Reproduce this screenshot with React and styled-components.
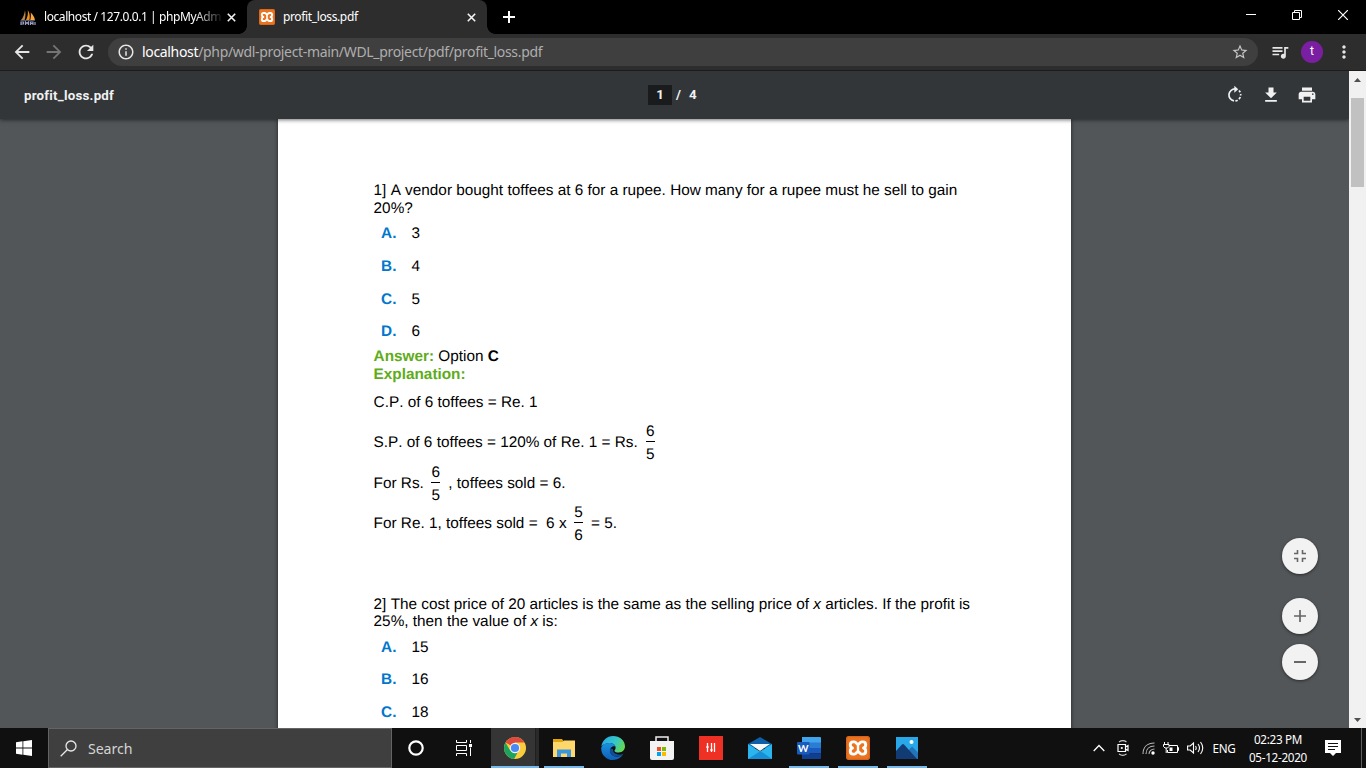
import React from 'react';
import styled, { createGlobalStyle } from 'styled-components';
import {
  MdArrowBack, MdArrowForward, MdRefresh, MdInfoOutline, MdStarBorder,
  MdQueueMusic, MdMoreVert, MdFileDownload, MdPrint,
} from 'react-icons/md';

const ui = '"Noto Sans", "Open Sans", sans-serif';

const Global = createGlobalStyle`
  * { box-sizing: border-box; }
  html, body { margin: 0; padding: 0; overflow: hidden; }
  svg { display: block; flex: none; }
`;

const Screen = styled.div`
  width: 1366px;
  height: 768px;
  display: flex;
  flex-direction: column;
  overflow: hidden;
  font-family: ${ui};
`;

/* ---------- browser chrome ---------- */
const TabStrip = styled.div`
  height: 34px;
  flex: none;
  background: #000;
  display: flex;
  color: #fff;
`;

const Tab = styled.div`
  position: relative;
  width: ${p => p.$w}px;
  height: 34px;
  display: flex;
  align-items: center;
  padding: 0 11px 0 ${p => p.$pl}px;
  border-radius: 8px 8px 0 0;
  background: ${p => (p.$active ? '#2d2d2d' : '#000')};
  &::before, &::after {
    content: '';
    display: ${p => (p.$active ? 'block' : 'none')};
    position: absolute;
    bottom: 0;
    width: 8px;
    height: 8px;
  }
  &::before { left: -8px; background: radial-gradient(circle at 0 0, transparent 7.5px, #2d2d2d 8px); }
  &::after { right: -8px; background: radial-gradient(circle at 100% 0, transparent 7.5px, #2d2d2d 8px); }
`;

const TabTitle = styled.span`
  flex: 1;
  margin: 0 2px 0 8px;
  white-space: nowrap;
  font-size: 12px;
  line-height: 18px;
  letter-spacing: ${p => p.$ls}px;
  ${p => p.$fade && 'mask-image: linear-gradient(90deg, #000 150px, transparent 180px);'}
`;

const NewTab = styled.div`
  width: 44px;
  display: flex;
  align-items: center;
  justify-content: center;
`;

const WindowControls = styled.div`
  margin-left: auto;
  display: flex;
  height: 29px;
  & > div { width: 46px; display: flex; align-items: center; justify-content: center; }
`;

const NavBar = styled.div`
  height: 37px;
  flex: none;
  display: flex;
  align-items: center;
  padding: 0 11px;
  background: #2d2d2d;
  border-bottom: 1px solid #1c1c1c;
  color: #e6e6e6;
  & > * { flex: none; }
`;

const NavButton = styled.div`
  width: 32px;
  display: flex;
  justify-content: flex-start;
  color: ${p => (p.$off ? '#757575' : '#e6e6e6')};
`;

const Omnibox = styled.div`
  width: 1150px;
  height: 28px;
  margin: 0 12px 0 1px;
  border-radius: 14px;
  background: #3f3f3f;
  display: flex;
  align-items: center;
  padding: 0 9px;
`;

const Url = styled.span`
  flex: 1;
  margin-left: 7px;
  font-size: 14px;
  line-height: 20px;
  letter-spacing: ${p => p.$ls}px;
  color: #aeaeae;
  white-space: nowrap;
  b { font-weight: 400; color: #fff; }
`;

const Avatar = styled.div`
  width: 22px;
  height: 22px;
  margin: 0 11px;
  border-radius: 50%;
  background: #7b1fa2;
  color: #fff;
  text-align: center;
  font: 12px/21px Roboto, sans-serif;
`;

/* ---------- pdf viewer ---------- */
const Viewer = styled.div`
  height: 657px;
  flex: none;
  display: flex;
  background: #525659;
`;

const ViewerMain = styled.div`
  position: relative;
  width: 1349px;
  height: 657px;
  display: flex;
  flex-direction: column;
  overflow: hidden;
`;

const PdfBar = styled.div`
  position: relative;
  z-index: 1;
  height: 48px;
  flex: none;
  display: grid;
  grid-template-columns: 648px 1fr auto;
  align-items: center;
  padding-right: 32px;
  background: #323639;
  box-shadow: 0 1px 4px rgba(0, 0, 0, 0.55);
  color: #f1f1f1;
  font: 700 13.3px/20px Roboto, sans-serif;
`;

const FileName = styled.div`
  padding: 1px 0 0 24px;
  letter-spacing: ${p => p.$ls}px;
`;

const Pager = styled.div`
  display: flex;
  align-items: center;
  & > b { width: 24px; height: 20px; margin-right: 4px; background: #191b1d; text-align: center; font-weight: 700; }
  & > i { font-style: normal; width: 13px; }
`;

const PdfTools = styled.div`
  display: flex;
  gap: 16px;
`;

const Page = styled.div`
  width: 793px;
  height: 1123px;
  flex: none;
  margin-left: 278px;
  padding: 63px 96px 0 95.6px;
  background: #fff;
  box-shadow: 0 0 4px rgba(0, 0, 0, 0.6);
  color: #000;
  font: 15.33px/18px "Liberation Sans", Arial, sans-serif;
  font-kerning: none;
  text-rendering: geometricPrecision;
`;

const Question = styled.p`
  margin: 0 -10px ${p => p.$mb}px 0;
  line-height: ${p => p.$lh || 18}px;
  white-space: nowrap;
`;

const Option = styled.div`
  display: flex;
  height: ${p => p.$h}px;
  padding-left: 7.5px;
  & > b { width: 30.5px; color: #0077cc; }
`;

const Para = styled.div`
  margin-top: ${p => p.$mt || 0}px;
  b.label { color: #5eac1a; }
`;

const Equation = styled.div`
  display: flex;
  height: ${p => p.$h}px;
  white-space: pre;
  & > span { padding-top: 10px; }
`;

const FractionBox = styled.div`
  width: 9px;
  height: 40px;
  margin: -1px ${p => p.$r || 0}px 0 ${p => p.$l}px;
  display: flex;
  flex-direction: column;
  align-items: center;
  & > hr { width: 9px; height: 1px; margin: 0 0 4px; border: 0; background: #000; flex: none; }
`;

const ZoomButtons = styled.div`
  position: absolute;
  z-index: 2;
  right: 31px;
  top: 467px;
  display: flex;
  flex-direction: column;
`;

const RoundButton = styled.div`
  width: 36px;
  height: 36px;
  margin-bottom: ${p => p.$mb || 0}px;
  border-radius: 50%;
  background: #f2f2f2;
  box-shadow: 0 1px 3px rgba(0, 0, 0, 0.5);
  display: flex;
  align-items: center;
  justify-content: center;
`;

const ScrollTrack = styled.div`
  width: 17px;
  display: flex;
  flex-direction: column;
  justify-content: space-between;
  align-items: center;
  padding: 7px 0 6px;
  background: #f1f1f1;
`;

const ScrollThumb = styled.div`
  width: 13px;
  height: 89px;
  margin: 16px 0 auto;
  background: #c1c1c1;
`;

/* ---------- taskbar ---------- */
const Taskbar = styled.div`
  height: 40px;
  flex: none;
  display: flex;
  background: #101010;
  color: #fff;
`;

const Start = styled.div`
  width: 48px;
  display: flex;
  align-items: center;
  justify-content: center;
`;

const Search = styled.div`
  width: 344px;
  display: flex;
  align-items: center;
  padding-left: 11px;
  gap: 11px;
  background: #3f3f3f;
  border: 1px solid #646464;
  color: #d4d4d4;
  font-size: 14.2px;
  letter-spacing: ${p => p.$ls}px;
`;

const Apps = styled.div`
  display: flex;
`;

const AppSlot = styled.div`
  width: ${p => p.$w || 49}px;
  display: flex;
  align-items: center;
  justify-content: center;
`;

const AppTile = styled.div`
  width: ${p => p.$w || 40}px;
  height: 40px;
  display: flex;
  align-items: center;
  justify-content: center;
  background: ${p => (p.$focus ? 'linear-gradient(90deg, #353535 44px, #202020 44px, #202020 45px, #2a2a2a 45px)' : 'transparent')};
  border-bottom: 2px solid ${p => (p.$open ? '#76b9ed' : 'transparent')};
  padding-top: 2px;
`;

const Tray = styled.div`
  margin-left: auto;
  width: 279px;
  display: flex;
  align-items: center;
`;

const TrayIcon = styled.div`
  width: ${p => p.$w}px;
  display: flex;
  justify-content: center;
`;

const TrayText = styled.div`
  width: ${p => p.$w}px;
  text-align: center;
  font-size: 11.7px;
  line-height: 18px;
  letter-spacing: ${p => p.$ls}px;
  white-space: nowrap;
`;

const ShowDesktop = styled.div`
  margin-left: auto;
  width: 5px;
  height: 40px;
  border-left: 1px solid #5d5d5d;
`;

const Xampp = ({ size }) => (
  <svg width={size} height={size} viewBox="0 0 24 24">
    <rect width="24" height="24" rx="3" fill="#ec7420" />
    <rect x="0.7" y="0.7" width="22.6" height="22.6" rx="2.500" fill="none" stroke="#d2601a" strokeWidth="1" />
    <path d="M7 5.900h1.500c1.700 0 1.900 2.300 3.500 2.300s1.800-2.300 3.500-2.300H17c1.900 0 2.700 1.200 2.700 2.900 0 1.500-.8 2.900-2.200 3.200 1.400.3 2.200 1.700 2.200 3.200 0 1.700-.8 2.900-2.700 2.900h-1.500c-1.700 0-1.900-2.300-3.500-2.300s-1.800 2.300-3.500 2.300H7c-1.900 0-2.700-1.200-2.700-2.900 0-1.500.8-2.900 2.200-3.200-1.400-.3-2.200-1.700-2.200-3.200 0-1.700.8-2.900 2.700-2.900z" fill="none" stroke="#fff" strokeWidth="2.900" strokeLinejoin="round" />
    <path d="M10.800 12h2.400" stroke="#fff" strokeWidth="6" />
  </svg>
);

const PhpMyAdminIcon = () => (
  <svg width="16" height="16" viewBox="0 0 16 16">
    <path d="M1 11C3 9 4.600 5 5 1.200 5.800 4.500 5.600 8 4.600 11z" fill="#b88a50" />
    <path d="M6 11c1.600-3 2.200-6.500 1.800-10 2 3.400 2.500 6.500 1.600 10z" fill="#f09020" />
    <path d="M10.200 11c.8-2.800.9-5 .4-7.400 2.600 2.500 4 4.800 4.300 7.400z" fill="#f7a63a" />
    <path d="M.5 11.500h14.500" stroke="#4e5069" strokeWidth="1" />
    <path d="M1 16v-3h2.500v2H1M5.500 16v-3l1.500 1.500L8.500 13v3M10.500 16v-3H13v3M10.500 14.500H13M15 13v3" fill="none" stroke="#9a9ec4" strokeWidth="1.200" />
  </svg>
);

const CloseX = () => (
  <svg width="9" height="9" viewBox="0 0 9 9">
    <path d="M.8.8l7.400 7.400M8.200.8L.8 8.200" stroke="#f4f4f4" strokeWidth="1.600" />
  </svg>
);

const RotateIcon = () => (
  <svg width="20" height="20" viewBox="0 0 20 20">
    <path d="M10.500 4a6 6 0 0 0-1.500 11.900" fill="none" stroke="#f1f1f1" strokeWidth="1.700" />
    <path d="M9.300.8l3.900 3.400-3.900 3.500z" fill="#f1f1f1" />
    <path d="M10.400 15.900a6 6 0 0 0 5.200-6.900" fill="none" stroke="#f1f1f1" strokeWidth="1.700" strokeDasharray="2.400 1.500" />
    <path d="M14 5.500l1.300 1.800" stroke="#f1f1f1" strokeWidth="1.700" />
  </svg>
);

const Fraction = ({ top, bottom, left, right }) => (
  <FractionBox $l={left} $r={right}>
    <span>{top}</span>
    <hr />
    <span>{bottom}</span>
  </FractionBox>
);

const ChromeIcon = () => (
  <svg width="22" height="22" viewBox="0 0 22 22">
    <circle cx="11" cy="11" r="11" fill="#fbcd3c" />
    <path d="M11 11L1.500 5.500A11 11 0 0 1 20.500 5.500H11z" fill="#dd4b3e" />
    <path d="M1.500 5.500a11 11 0 0 0 8.600 16.500l4.600-8.600L11 11 6.200 13.600z" fill="#1da35c" />
    <circle cx="11" cy="11" r="5.200" fill="#f4f4f4" />
    <circle cx="11" cy="11" r="4.100" fill="#4a8af4" />
  </svg>
);

const ExplorerIcon = () => (
  <svg width="22" height="18" viewBox="0 0 22 18">
    <path d="M0 0h9l1.500 2H22v15.500H0z" fill="#e5a50a" />
    <path d="M0 3h9.500L11 1.600h11V18H0z" fill="#ffd76a" />
    <path d="M4 18v-7.500h14V18h-4v-3.500H8V18z" fill="#3a96dd" />
  </svg>
);

const EdgeIcon = () => (
  <svg width="24" height="24" viewBox="0 0 24 24">
    <defs>
      <linearGradient id="edgeTop" x1="0" x2="1" y1="0.2" y2="0.6">
        <stop offset="0" stopColor="#28a8e8" />
        <stop offset="0.55" stopColor="#35c8c8" />
        <stop offset="1" stopColor="#65d84e" />
      </linearGradient>
      <linearGradient id="edgeLow" x1="0" x2="0" y1="0" y2="1">
        <stop offset="0" stopColor="#1b92de" />
        <stop offset="1" stopColor="#0f5fb8" />
      </linearGradient>
    </defs>
    <path d="M.4 10.500C1.200 4.400 6 0 12 0c6.800 0 12 4.600 12 10.300 0 3.700-2.600 6.200-6.300 6.200-2.800 0-4.200-.9-4.200-1.800 0-.7 1.100-1.200 1.100-3C14.600 9.500 12.500 7 9 7 5.500 7 2 8.300.4 10.500z" fill="url(#edgeTop)" />
    <path d="M.3 11.500C1.500 8.300 5 6.900 8.800 7c3 .1 5.200 1.600 5.700 3.500C12 9.200 9 11.500 9 14.800c0 4 4.600 6.700 8.600 5.700 2-.4 3.600-1.500 4.700-2.700C20.500 21.500 16.500 24 12 24 5.400 24-.4 18.400.3 11.500z" fill="url(#edgeLow)" />
    <path d="M9.200 12.500c-1.600 4.500 2.300 9 8 8.100 2.200-.4 3.900-1.500 5.100-2.800-2.600 1.300-5.800 1.200-8-.2-1.700-1-2.500-2.500-2.300-4.600z" fill="#104d96" />
  </svg>
);

const StoreIcon = () => (
  <svg width="24" height="24" viewBox="0 0 24 24">
    <path d="M6 6V1h12v5" fill="none" stroke="#ededed" strokeWidth="1.500" />
    <path d="M0 5h24V22q0 2-2 2H2q-2 0-2-2z" fill="#f3f3f3" />
    <path d="M7 11h4v4H7z" fill="#f25022" />
    <path d="M12 11h4v4h-4z" fill="#7fba00" />
    <path d="M7 16h4v4H7z" fill="#00a4ef" />
    <path d="M12 16h4v4h-4z" fill="#ffb900" />
  </svg>
);

const MixerIcon = () => (
  <svg width="24" height="24" viewBox="0 0 24 24">
    <path d="M0 0h24v24H0z" fill="#ee3124" />
    <path d="M8.500 7v9M12.500 7v9M15.500 7v9" stroke="#fff" strokeWidth="1.300" />
    <path d="M7.300 11h2.400M11.300 14h2.400" stroke="#fff" strokeWidth="1.300" />
  </svg>
);

const MailIcon = () => (
  <svg width="24" height="22" viewBox="0 0 24 22">
    <path d="M0 7L12 0l12 7v4H0z" fill="#0f5ea8" />
    <path d="M0 7l12 7.500L24 7v15H0z" fill="#2bb5ee" />
    <path d="M0 22l12.500-8L24 22z" fill="#168fd8" />
    <path d="M2 7h20l-10 7z" fill="#f5f7f9" />
  </svg>
);

const WordIcon = () => (
  <svg width="24" height="22" viewBox="0 0 24 22">
    <path d="M5 0h18q1 0 1 1v5H5z" fill="#41a5ee" />
    <path d="M5 5.500h19V11H5z" fill="#2b7cd3" />
    <path d="M5 11h19v5.500H5z" fill="#185abd" />
    <path d="M5 16.500h19V21q0 1-1 1H5z" fill="#103f91" />
    <rect y="5" width="12.500" height="12.500" rx="1" fill="#185abd" />
    <text x="6.250" y="14.800" fill="#fff" textAnchor="middle" fontFamily="Lato, sans-serif" fontWeight="700" fontSize="10">W</text>
  </svg>
);

const PhotosIcon = () => (
  <svg width="22" height="22" viewBox="0 0 22 22">
    <path d="M0 0h22v22H0z" fill="#28a8e8" />
    <path d="M10 16l6-6.500 6 6V22H10z" fill="#2472b8" />
    <path d="M0 14l6-6.500q1-.8 2 0L21 22H0z" fill="#123a73" />
    <circle cx="15.500" cy="5" r="2" fill="#fff" />
  </svg>
);

export default function App() {
  return (
    <Screen>
      <Global />
      <TabStrip>
        <Tab $w={247} $pl={20}>
          <PhpMyAdminIcon />
          <TabTitle $fade $ls={-0.42}>localhost / 127.0.0.1 | phpMyAdm</TabTitle>
          <CloseX />
        </Tab>
        <Tab $active $w={240} $pl={12}>
          <Xampp size={16} />
          <TabTitle $ls={-0.37}>profit_loss.pdf</TabTitle>
          <CloseX />
        </Tab>
        <NewTab>
          <svg width="12" height="12" viewBox="0 0 12 12">
            <path d="M6 0v12M0 6h12" stroke="#fff" strokeWidth="2" />
          </svg>
        </NewTab>
        <WindowControls>
          <div><svg width="10" height="10"><path d="M0 4.500h10" stroke="#fff" /></svg></div>
          <div>
            <svg width="10" height="10"><path d="M.5 2.500h7v7h-7zM2.500 2.500v-2h7v7h-2" fill="none" stroke="#fff" /></svg>
          </div>
          <div><svg width="10" height="10"><path d="M0 0l10 10M10 0L0 10" stroke="#fff" strokeWidth="1.200" /></svg></div>
        </WindowControls>
      </TabStrip>

      <NavBar>
        <NavButton><MdArrowBack size={22} /></NavButton>
        <NavButton $off><MdArrowForward size={22} /></NavButton>
        <NavButton><MdRefresh size={22} /></NavButton>
        <Omnibox>
          <MdInfoOutline size={18} />
          <Url $ls={-0.33}><b>localhost</b>/php/wdl-project-main/WDL_project/pdf/profit_loss.pdf</Url>
          <MdStarBorder size={18} color="#c4c4c4" />
        </Omnibox>
        <MdQueueMusic size={20} />
        <Avatar>t</Avatar>
        <MdMoreVert size={20} />
      </NavBar>

      <Viewer>
        <ViewerMain>
          <PdfBar>
            <FileName $ls={0.23}>profit_loss.pdf</FileName>
            <Pager><b>1</b><i>/</i><span>4</span></Pager>
            <PdfTools>
              <RotateIcon />
              <MdFileDownload size={20} />
              <MdPrint size={20} />
            </PdfTools>
          </PdfBar>
          <Page>
            <Question $mb={7}>
              1] A vendor bought toffees at 6 for a rupee. How many for a rupee must he sell to gain<br />20%?
            </Question>
            <Option $h={33}><b>A.</b>3</Option>
            <Option $h={33}><b>B.</b>4</Option>
            <Option $h={32}><b>C.</b>5</Option>
            <Option $h={25}><b>D.</b>6</Option>
            <Para><b className="label">Answer:</b> Option <b>C</b></Para>
            <Para><b className="label">Explanation:</b></Para>
            <Para $mt={10}>C.P. of 6 toffees = Re. 1</Para>
            <Para $mt={12}>
              <Equation $h={41}>
                <span>S.P. of 6 toffees = 120% of Re. 1 = Rs.</span>
                <Fraction top="6" bottom="5" left={8} />
              </Equation>
              <Equation $h={40}>
                <span>For Rs.</span>
                <Fraction top="6" bottom="5" left={7.5} right={8} />
                <span>, toffees sold = 6.</span>
              </Equation>
              <Equation $h={91}>
                <span>For Re. 1, toffees sold =  6 x</span>
                <Fraction top="5" bottom="6" left={7.5} right={8} />
                <span>= 5.</span>
              </Equation>
            </Para>
            <Question $mb={9} $lh={17}>
              2] The cost price of 20 articles is the same as the selling price of <i>x</i> articles. If the profit is<br />
              25%, then the value of <i>x</i> is:
            </Question>
            <Option $h={32}><b>A.</b>15</Option>
            <Option $h={33}><b>B.</b>16</Option>
            <Option $h={33}><b>C.</b>18</Option>
          </Page>
          <ZoomButtons>
            <RoundButton $mb={24}>
              <svg width="12" height="12" viewBox="0 0 12 12">
                <path d="M0 3.500h3.500V0M8.500 0v3.500H12M0 8.500h3.500V12M8.500 12V8.500H12" fill="none" stroke="#666" strokeWidth="1.600" />
              </svg>
            </RoundButton>
            <RoundButton $mb={10}>
              <svg width="12" height="12" viewBox="0 0 12 12"><path d="M6 0v12M0 6h12" stroke="#666" strokeWidth="1.700" /></svg>
            </RoundButton>
            <RoundButton>
              <svg width="12" height="12" viewBox="0 0 12 12"><path d="M0 6h12" stroke="#666" strokeWidth="2" /></svg>
            </RoundButton>
          </ZoomButtons>
        </ViewerMain>
        <ScrollTrack>
          <svg width="7" height="4"><path d="M0 4l3.500-4L7 4z" fill="#505050" /></svg>
          <ScrollThumb />
          <svg width="7" height="4"><path d="M0 0l3.500 4L7 0z" fill="#505050" /></svg>
        </ScrollTrack>
      </Viewer>

      <Taskbar>
        <Start>
          <svg width="16" height="16" viewBox="0 0 16 16">
            <path d="M0 2.200l6.500-.9v6.200H0zM7.300 1.200L16 0v7.500H7.300zM0 8.400h6.500v6.300L0 13.800zM7.300 8.400H16V16l-8.700-1.200z" fill="#fff" />
          </svg>
        </Start>
        <Search $ls={-0.1}>
          <svg width="17" height="17" viewBox="0 0 17 17">
            <circle cx="11" cy="6" r="5" fill="none" stroke="#e8e8e8" strokeWidth="1.300" />
            <path d="M7.500 9.500L.7 16.300" stroke="#e8e8e8" strokeWidth="1.300" />
          </svg>
          Search
        </Search>
        <Apps>
          <AppSlot $w={48}>
            <svg width="16" height="16"><circle cx="8" cy="8" r="6.700" fill="none" stroke="#fff" strokeWidth="2.200" /></svg>
          </AppSlot>
          <AppSlot $w={47}>
            <svg width="16" height="16" viewBox="0 0 16 16">
              <path d="M.5 0v2.500h10V0M.5 16v-2.500h10V16M.5 5.500h10v5H.5zM14.500 0v3M14.500 7.500V16" fill="none" stroke="#fff" />
              <path d="M13 4h3v3h-3z" fill="#fff" />
            </svg>
          </AppSlot>
          <AppSlot $w={56}><AppTile $focus $open $w={48}><ChromeIcon /></AppTile></AppSlot>
          <AppSlot $w={42}><AppTile $open><ExplorerIcon /></AppTile></AppSlot>
          <AppSlot $w={56}><AppTile><EdgeIcon /></AppTile></AppSlot>
          <AppSlot $w={41}><AppTile><StoreIcon /></AppTile></AppSlot>
          <AppSlot $w={58}><AppTile><MixerIcon /></AppTile></AppSlot>
          <AppSlot $w={40}><AppTile><MailIcon /></AppTile></AppSlot>
          <AppSlot $w={58}><AppTile $open><WordIcon /></AppTile></AppSlot>
          <AppSlot $w={40}><AppTile $open><Xampp size={24} /></AppTile></AppSlot>
          <AppSlot $w={58}><AppTile $open><PhotosIcon /></AppTile></AppSlot>
        </Apps>
        <Tray>
          <TrayIcon $w={23}>
            <svg width="12" height="8"><path d="M.7 7L6 1.500 11.300 7" fill="none" stroke="#fff" strokeWidth="1.300" /></svg>
          </TrayIcon>
          <TrayIcon $w={26}>
            <svg width="12" height="16" viewBox="0 0 12 16">
              <path d="M2 2Q6-.7 9.500 2M2 14q3.800 2.700 7.500 0" fill="none" stroke="#ccc" strokeWidth="1.100" />
              <path d="M1 4.500h7.500v7H1zM8.500 7L11 5.500v5L8.500 9" fill="none" stroke="#fff" strokeWidth="1.200" />
              <circle cx="4.800" cy="8" r="1.100" fill="#fff" />
            </svg>
          </TrayIcon>
          <TrayIcon $w={24}>
            <svg width="13" height="13" viewBox="0 0 13 13">
              <path d="M1 12C1 5 5.500 1 12.500 1M4 12c0-5 3.500-8 8.500-8M7 12c0-3 2.500-5 5.500-5" fill="none" stroke="#bbb" strokeWidth="1.100" />
              <circle cx="11" cy="11" r="1.700" fill="#fff" />
            </svg>
          </TrayIcon>
          <TrayIcon $w={22}>
            <svg width="16" height="13" viewBox="0 0 16 13">
              <path d="M6 3.500h8.500v7H4.500V8M14.500 5.500h1v3h-1M1.500 0v2.500M5 0v2.500M.5 2.500h5.500v2L4.500 6H2L.5 4.500zM3.200 6v5" fill="none" stroke="#fff" />
              <path d="M6.500 5.500h3v3.500h-3z" fill="#fff" />
            </svg>
          </TrayIcon>
          <TrayIcon $w={27}>
            <svg width="17" height="14" viewBox="0 0 17 14">
              <path d="M.6 5h2.600L6.500 2v10L3.200 9H.6z" fill="none" stroke="#fff" strokeWidth="1.100" />
              <path d="M8.500 5q1.400 2 0 4M11 3q3 4 0 8M13.500 1q4.500 6 0 12" fill="none" stroke="#fff" strokeWidth="1.100" />
            </svg>
          </TrayIcon>
          <TrayText $w={30} $ls={-0.3}>ENG</TrayText>
          <TrayText $w={78} $ls={-0.3}>02:23 PM<br />05-12-2020</TrayText>
          <TrayIcon $w={32}>
            <svg width="16" height="16" viewBox="0 0 16 16">
              <path d="M0 0h16v13h-5l-3 3-3-3H0z" fill="#fff" />
              <path d="M3 3.500h10M3 6.500h10M3 9.500h7" stroke="#101010" />
            </svg>
          </TrayIcon>
          <ShowDesktop />
        </Tray>
      </Taskbar>
    </Screen>
  );
}
